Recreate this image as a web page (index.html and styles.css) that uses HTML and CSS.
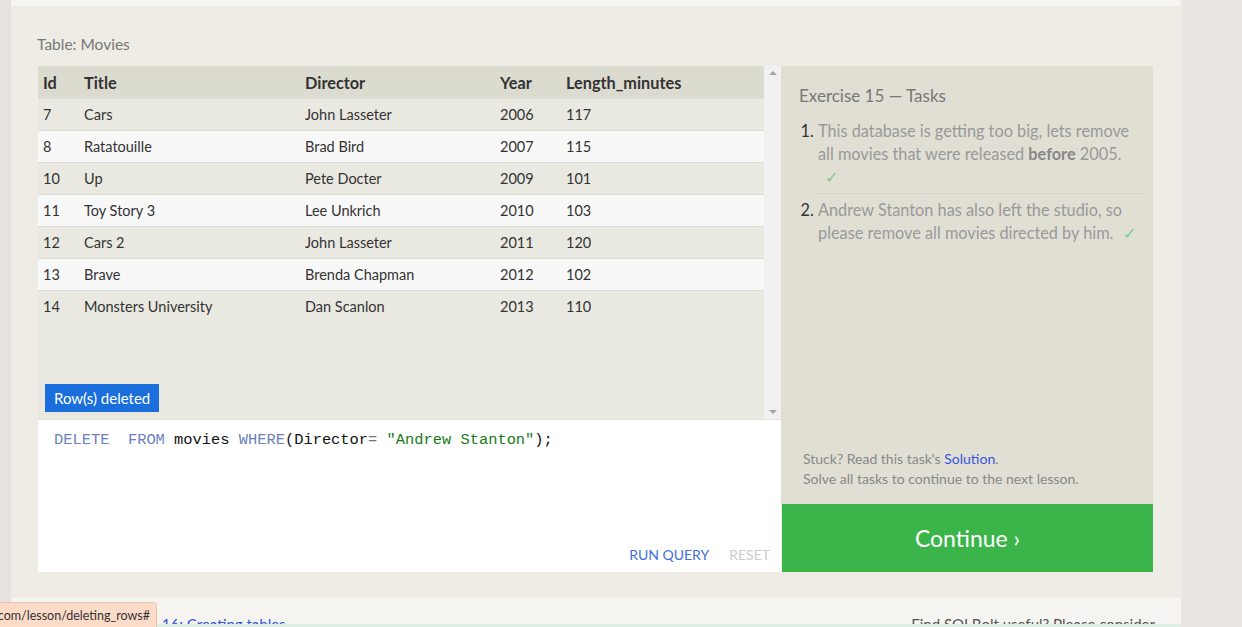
FILE: index.html
```html
<!DOCTYPE html>
<html>
<head>
<meta charset="utf-8">
<link rel="stylesheet" href="styles.css">
</head>
<body>
<div class="page">
  <div class="side-left"></div>
  <div class="main">
    <div class="topband"></div>
    <div class="panel">
      <div class="caption">Table: Movies</div>
      <div class="workspace">
        <div class="left-col">
          <div class="results">
            <div class="table-wrap">
              <table class="movies">
                <thead>
                  <tr><th class="c-id">Id</th><th class="c-title">Title</th><th class="c-dir">Director</th><th class="c-year">Year</th><th>Length_minutes</th></tr>
                </thead>
                <tbody>
                  <tr><td>7</td><td>Cars</td><td>John Lasseter</td><td>2006</td><td>117</td></tr>
                  <tr><td>8</td><td>Ratatouille</td><td>Brad Bird</td><td>2007</td><td>115</td></tr>
                  <tr><td>10</td><td>Up</td><td>Pete Docter</td><td>2009</td><td>101</td></tr>
                  <tr><td>11</td><td>Toy Story 3</td><td>Lee Unkrich</td><td>2010</td><td>103</td></tr>
                  <tr><td>12</td><td>Cars 2</td><td>John Lasseter</td><td>2011</td><td>120</td></tr>
                  <tr><td>13</td><td>Brave</td><td>Brenda Chapman</td><td>2012</td><td>102</td></tr>
                  <tr><td>14</td><td>Monsters University</td><td>Dan Scanlon</td><td>2013</td><td>110</td></tr>
                </tbody>
              </table>
              <div class="badge">Row(s) deleted</div>
            </div>
            <div class="scrollbar">
              <span class="arrow up"></span>
              <span class="arrow down"></span>
            </div>
          </div>
          <div class="editor">
            <div class="code"><span class="kw">DELETE</span>  <span class="kw">FROM</span> movies <span class="kw">WHERE</span>(Director<span class="op">=</span> <span class="str">"Andrew Stanton"</span>);</div>
            <div class="actions">
              <span class="run">RUN QUERY</span>
              <span class="reset">RESET</span>
            </div>
          </div>
        </div>
        <div class="right-col">
          <div class="tasks">
            <div class="tasks-title">Exercise 15 — Tasks</div>
            <ol class="task-list">
              <li>This database is getting too big, lets remove all movies that were released <b>before</b> 2005. <span class="check block">✓</span></li>
              <li>Andrew Stanton has also left the studio, so please remove all movies directed by him. <span class="check">✓</span></li>
            </ol>
            <div class="help">
              <div>Stuck? Read this task's <span class="link">Solution</span>.</div>
              <div>Solve all tasks to continue to the next lesson.</div>
            </div>
          </div>
          <div class="continue">Continue ›</div>
        </div>
      </div>
    </div>
    <div class="footer">
      <div class="prev-next"><span class="link">Lesson 16: Creating tables</span></div>
      <div class="support">Find SQLBolt useful? Please consider</div>
    </div>
  </div>
  <div class="side-right"></div>
</div>
<div class="status"><span>t.com/lesson/deleting_rows#</span></div>
</body>
</html>
```

FILE: styles.css
```css
html, body {
  margin: 0;
  padding: 0;
}
body {
  width: 1242px;
  height: 627px;
  overflow: hidden;
  background: #e8e5e2;
  font-family: Lato, "Open Sans", sans-serif;
  position: relative;
}
.page {
  display: flex;
  height: 627px;
}
.side-left {
  width: 11px;
  background: #e6e3df;
}
.side-right {
  flex: 1;
  background: #e9e6e3;
}
.main {
  width: 1170px;
  display: flex;
  flex-direction: column;
}
.topband {
  height: 6px;
  background: #f6f5f1;
}
.panel {
  background: #efece5;
  padding: 28px 28px 26px 27px;
  border-top-right-radius: 4px;
}
.caption {
  color: #777;
  font-size: 15.5px;
  line-height: 20px;
  margin-left: -1px;
  margin-bottom: 12px;
}
.workspace {
  display: flex;
  height: 506px;
}
.left-col {
  width: 743px;
  display: flex;
  flex-direction: column;
}
.results {
  display: flex;
  height: 353px;
}
.table-wrap {
  width: 726px;
  background: #e9e8e1;
  position: relative;
}
.movies {
  width: 100%;
  border-collapse: collapse;
  font-size: 14.5px;
  color: #333;
}
.movies th {
  background: #dcdbd0;
  text-align: left;
  font-weight: bold;
  font-size: 16.3px;
  height: 32px;
  padding: 0 0 0 5px;
  color: #333;
}
.movies td {
  height: 31px;
  padding: 0 0 0 5px;
  border-top: 1px solid #dddcd5;
}
.movies tbody tr:nth-child(even) td {
  background: #f8f8f8;
}
.movies .c-id { width: 36px; }
.movies .c-title { width: 216px; }
.movies .c-dir { width: 190px; }
.movies .c-year { width: 61px; }
.badge {
  position: absolute;
  left: 7px;
  top: 318px;
  height: 28px;
  line-height: 28px;
  padding: 0 9px;
  background: #1a6fdc;
  color: #fff;
  font-size: 15px;
}
.scrollbar {
  width: 17px;
  background: #f1f1f1;
  position: relative;
}
.arrow {
  position: absolute;
  left: 5px;
  width: 0;
  height: 0;
  border-left: 4px solid transparent;
  border-right: 4px solid transparent;
}
.arrow.up {
  top: 5px;
  border-bottom: 4px solid #a3a3a3;
}
.arrow.down {
  bottom: 5px;
  border-top: 4px solid #a3a3a3;
}
.editor {
  flex: 1;
  background: #fff;
  border-top: 1px solid #e4e2dc;
  display: flex;
  flex-direction: column;
  justify-content: space-between;
}
.code {
  font-family: "Liberation Mono", "DejaVu Sans Mono", monospace;
  font-size: 15.4px;
  line-height: 20px;
  padding: 10px 0 0 16px;
  white-space: pre;
  color: #111;
}
.code .kw { color: #6e7fbd; }
.code .op { color: #777; }
.code .str { color: #1a7a1a; }
.actions {
  display: flex;
  justify-content: flex-end;
  gap: 20px;
  padding: 0 11px 7px 0;
  font-size: 14px;
  line-height: 20px;
}
.run { color: #3f6fd8; }
.reset { color: #cccccc; }
.right-col {
  width: 372px;
  display: flex;
  flex-direction: column;
}
.tasks {
  flex: 1;
  background: #e1dfd4;
  padding: 19px 7px 0 18px;
  display: flex;
  flex-direction: column;
}
.tasks-title {
  color: #777;
  font-size: 17px;
  line-height: 22px;
}
.task-list {
  margin: 12px 0 0 0;
  padding-left: 19px;
  color: #999;
  font-size: 16.3px;
  line-height: 23px;
}
.task-list li::marker {
  color: #333;
}
.task-list li {
  padding: 0 4px 5px 0;
}
.task-list li + li {
  border-top: 1px solid #d5d3c8;
  padding-top: 4px;
}
.task-list b {
  color: #888;
}
.check {
  color: #7ccf8a;
  margin-left: 5px;
}
.check.block {
  display: block;
  margin-left: 7px;
}
.help {
  margin-top: auto;
  padding: 0 0 15px 4px;
  color: #888;
  font-size: 14px;
  line-height: 20px;
}
.link {
  color: #3355dd;
}
.continue {
  height: 68px;
  background: #3bb54a;
  color: #fff;
  font-size: 23px;
  display: flex;
  align-items: center;
  justify-content: center;
  margin-left: 1px;
}
.footer {
  flex: 1;
  background: #f5f4f0;
  display: flex;
  justify-content: space-between;
  padding: 17px 26px 0 102px;
  font-size: 15px;
  color: #555;
  overflow: hidden;
  border-bottom: 3px solid #dfefe4;
}
.status {
  position: absolute;
  left: 0;
  top: 602px;
  height: 25px;
  width: 157px;
  display: flex;
  justify-content: flex-end;
  align-items: center;
  padding: 0 6px 0 0;
  background: #fcdcc8;
  border: 1px solid #e9c6b0;
  border-left: none;
  border-bottom: none;
  border-radius: 0 4px 0 0;
  color: #333;
  font-size: 12.5px;
  white-space: nowrap;
  overflow: hidden;
  box-sizing: border-box;
}
.status span {
  flex: none;
}
```
